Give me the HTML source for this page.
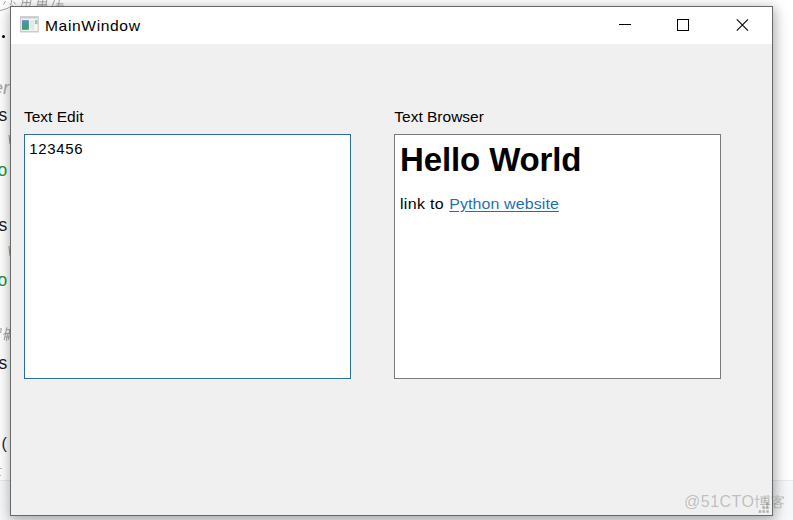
<!DOCTYPE html>
<html>
<head>
<meta charset="utf-8">
<title>MainWindow</title>
<style>
  html, body { margin: 0; padding: 0; }
  body {
    width: 793px; height: 520px; overflow: hidden; position: relative;
    background: #ffffff;
    font-family: "Liberation Sans", sans-serif;
    color: #000;
  }
  .abs { position: absolute; }
  /* page behind the window */
  #bg-bottom { left: 0; top: 480px; width: 793px; height: 40px; background: #f7f8f9; border-top: 1px solid #e9eaeb; }
  #bg-left { left: 0; top: 0; width: 10px; height: 520px; overflow: hidden; }
  .bgt { position: absolute; white-space: nowrap; font-size: 17.5px; line-height: 20px; color: #1c1c1c; }
  /* window */
  #shadow { left: 10px; top: 6px; width: 763px; height: 510px; box-shadow: 1px 3px 11px 1px rgba(0,0,0,0.29), 1px 4px 24px 0 rgba(0,0,0,0.07); }
  #win { left: 10px; top: 6px; width: 761px; height: 508px; border: 1px solid #686868; background: #f0f0f0; overflow: hidden; }
  #title { left: 0; top: 0; width: 761px; height: 37px; background: #ffffff; }
  .t { font-size: 15px; line-height: 20px; white-space: nowrap; transform-origin: 0 50%; }
  .box { background: #fff; box-sizing: border-box; width: 327px; height: 245px; }
  #edit { left: 13px; top: 127px; border: 1px solid #2a6ea6; }
  #browser { left: 383px; top: 127px; border: 1px solid #7a7a7a; }
  #h1 { font-weight: bold; font-size: 33px; line-height: 40px; white-space: nowrap; transform-origin: 0 50%; }
  a { color: #1f6fb5; text-decoration: underline; text-underline-offset: 2px; letter-spacing: 0.1px; }
</style>
</head>
<body>
  <!-- page behind -->
  <div id="bg-bottom" class="abs"></div>
  <div id="bg-left" class="abs">
    <span class="bgt" style="left:-1.5px; top:105px;">s</span>
    <span class="bgt" style="left:-1.5px; top:215px;">s</span>
    <span class="bgt" style="left:-1.5px; top:353px;">s</span>
    <span class="bgt" style="left:-2.5px; top:160px; color:#2f8f2f;">o</span>
    <span class="bgt" style="left:-2.5px; top:270px; color:#2f8f2f;">o</span>
    <span class="bgt" style="left:1.4px; top:434px; font-size:16px; color:#1a2238;">(</span>
    <span class="bgt" style="left:-7.5px; top:77.5px; color:#adadad; font-style:italic; font-size:19px;">er</span>
    <svg class="abs" style="left:0; top:324px;" width="10" height="20" viewBox="0 0 10 20" fill="none" stroke="#a4a4a4" stroke-width="1">
      <path d="M0 5 L1.4 4.6 L0.6 9 M6.8 3.4 L4.2 16 M5.6 8.6 L3.4 11 M6.4 5.6 H10 M6 9.4 H10 M5.4 13 H10 M7.4 10 L6.4 17 M9.6 6 L8.6 16"/>
    </svg>
    <div class="abs" style="left:0; top:467.5px; width:1.6px; height:1.2px; background:#b4b4b4;"></div>
    <div class="abs" style="left:0; top:474.5px; width:1.4px; height:1.2px; background:#b4b4b4;"></div>
    <div class="abs" style="left:2px; top:35px; width:3px; height:3px; border-radius:50%; background:#000;"></div>
    <div class="abs" style="left:8.6px; top:135px; width:1.4px; height:8.5px; background:#a0a040; transform:skewX(6deg);"></div>
    <div class="abs" style="left:8.6px; top:246px; width:1.4px; height:10px; background:#a0a040; transform:skewX(6deg);"></div>
  </div>


  <!-- clipped italic CJK text fragments along the top edge -->
  <svg class="abs" style="left:0; top:0;" width="80" height="12" viewBox="0 0 80 12" fill="none" stroke="#a6a6a6" stroke-width="1">
    <path d="M11.6 0 L11 4.6 L9.8 4.2 M13.4 1.6 L15.6 4.4 M12.8 5.4 Q8 9 0 10.6 M5.6 1 L3.4 4.6"/>
    <path d="M23 0 L21.6 6 M31 0 L30 5.4 L28.8 5.2 M27 0 L26 6 M22.6 2.6 H30.4"/>
    <path d="M38.4 0 L37.4 5.6 M38 1.8 H47 M37.6 4.4 H46.6 M42.8 0 L42 6 M46.8 0 L46 5.6 M36.6 6 H47.6"/>
    <path d="M54.6 0 L52.4 6 M59.4 0 L58.4 6 M56.4 3.8 H63.4 M55.4 6 H64"/>
  </svg>
  <div id="shadow" class="abs"></div>
  <div id="win" class="abs">
    <div id="title" class="abs">
      <svg class="abs" style="left:9px; top:9px;" width="20" height="18" viewBox="0 0 20 18">
        <rect x="0" y="0.1" width="18.8" height="16.4" fill="#c9cbce"/>
        <rect x="1.3" y="2.5" width="16.4" height="12.4" fill="#f3f6f6"/>
        <defs><linearGradient id="ig" x1="0" y1="0" x2="0" y2="1"><stop offset="0" stop-color="#5f8fb8"/><stop offset="0.28" stop-color="#5890ac"/><stop offset="0.42" stop-color="#419a80"/><stop offset="1" stop-color="#3f9b7a"/></linearGradient></defs>
        <rect x="2" y="4.1" width="6.9" height="9.7" fill="url(#ig)"/>
        <rect x="9.8" y="4.1" width="4.4" height="9.7" fill="#e6e8e8"/>
        <rect x="14.9" y="4.1" width="2.8" height="4" fill="#a2c1b2"/>
      </svg>
      <div id="title-text" class="abs t" style="left:34.3px; top:8.6px; transform:scaleX(1.04); letter-spacing:0.6px;">MainWindow</div>
      <svg class="abs" style="left:600px; top:0;" width="161" height="37" viewBox="0 0 161 37">
        <path d="M8 17.5 H20" stroke="#000" stroke-width="1" fill="none"/>
        <rect x="66.5" y="12.5" width="11" height="11" stroke="#000" stroke-width="1" fill="none"/>
        <path d="M125.8 12.4 L137 23.6 M137 12.4 L125.8 23.6" stroke="#000" stroke-width="1.1" fill="none"/>
      </svg>
    </div>

    <div id="l1" class="abs t" style="left:13px; top:99.6px; font-size:15.5px; letter-spacing:0px;">Text Edit</div>
    <div id="l2" class="abs t" style="left:383.3px; top:99.6px; font-size:15.5px; letter-spacing:0px;">Text Browser</div>

    <div id="edit" class="abs box">
      <div id="num" class="abs t" style="left:4.3px; top:4.1px; letter-spacing:0.66px;">123456</div>
    </div>
    <div id="browser" class="abs box">
      <div id="h1" class="abs" style="left:5px; top:4.7px; letter-spacing:-0.12px;">Hello World</div>
      <div id="lk" class="abs t" style="left:5px; top:58.6px; font-size:15.5px; transform:scaleX(1.03); letter-spacing:0.3px;">link to&nbsp;<a style="margin-left:0.6px">Python website</a></div>
    </div>
  </div>

  <!-- size grip -->
  <svg class="abs" style="left:757px; top:501px;" width="14" height="13" viewBox="0 0 14 13">
    <g fill="#b4b4b4">
      <rect x="9.2" y="1.6" width="2.6" height="2.6"/>
      <rect x="5.4" y="5.4" width="2.6" height="2.6"/><rect x="9.2" y="5.4" width="2.6" height="2.6"/>
      <rect x="1.6" y="9.2" width="2.6" height="2.6"/><rect x="5.4" y="9.2" width="2.6" height="2.6"/><rect x="9.2" y="9.2" width="2.6" height="2.6"/>
    </g>
  </svg>
  <!-- watermark -->
  <div id="wm" class="abs" style="left:684px; top:493.4px; font-size:16px; line-height:18px; color:rgba(120,120,120,0.42); white-space:nowrap; letter-spacing:0.5px;">@51CTO</div>
  <svg class="abs" style="left:753.6px; top:494px;" width="32" height="15" preserveAspectRatio="none" viewBox="0 0 32 17" fill="none" stroke="rgba(120,120,120,0.42)" stroke-width="1.2" stroke-linecap="butt">
    <!-- bo -->
    <path d="M0.5 6 H5.6 M3 1.5 V15.5"/>
    <path d="M6.2 3.4 H16 M11 1.4 V10 M13.4 1.2 L14.8 2.4"/>
    <path d="M7.4 5.2 H14.8 V10 H7.4 Z M7.4 7.6 H14.8"/>
    <path d="M6 12 H16.2 M13 10.4 V15 Q13 15.8 11.4 15.6 M8.4 13 L9.6 14.4"/>
    <!-- ke -->
    <path d="M23.6 1.2 V3 M18 5.4 V3.4 H29.4 V5.4"/>
    <path d="M22.8 4.6 Q21.4 7.2 18.6 8.8 M22.2 5.8 H27 Q24.4 9.8 17.8 11.8 M21.4 6.8 Q24.6 10 29.8 11.4"/>
    <path d="M20.6 11.6 H27 V15.6 H20.6 Z"/>
  </svg>
</body>
</html>
